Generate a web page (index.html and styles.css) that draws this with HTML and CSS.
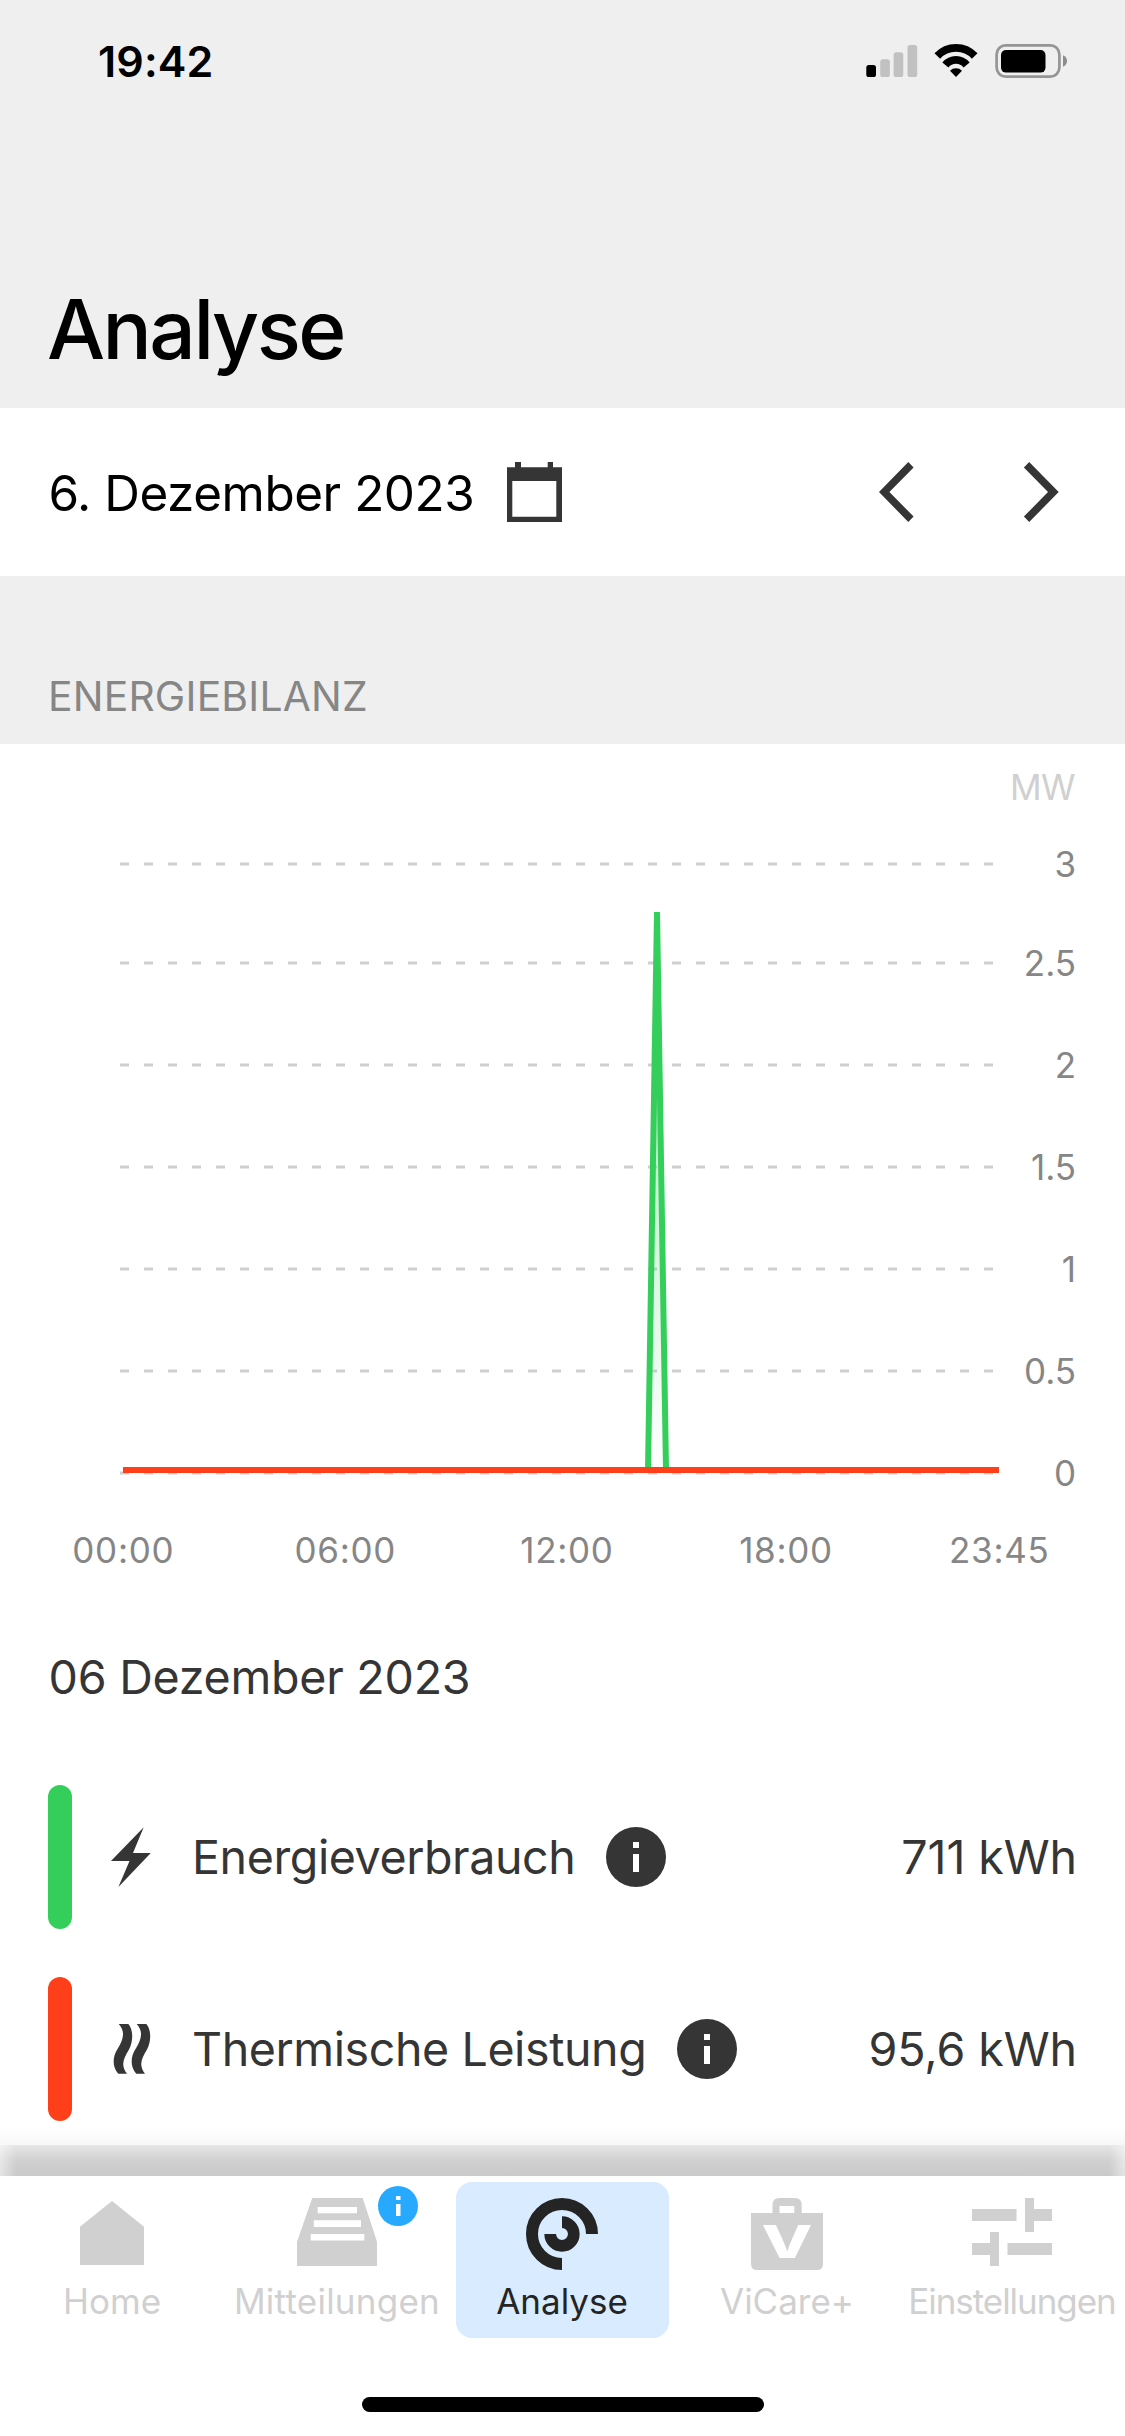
FILE: index.html
```html
<!DOCTYPE html>
<html lang="de">
<head>
<meta charset="utf-8">
<title>Analyse</title>
<link rel="stylesheet" href="styles.css">
</head>
<body>
<div class="screen">
  <header class="header">
    <div class="status-bar">
      <span class="time">19:42</span>
      <svg class="status-icons" viewBox="860 44 208 34" width="208" height="34">
        <rect x="866.3" y="65" width="9.7" height="12" rx="2.6"/>
        <g fill="#c1c1c1">
          <rect x="880.2" y="59.3" width="9.7" height="17.7" rx="2.6"/>
          <rect x="893.6" y="52.3" width="9.7" height="24.7" rx="2.6"/>
          <rect x="907.5" y="45" width="9.7" height="32" rx="2.6"/>
        </g>
        <g fill="none" stroke="#000">
          <path stroke-width="7.7" d="M937.3 56a25.6 25.6 0 0 1 37.4 0"/>
          <path stroke-width="7.8" d="M945.4 65a13.6 13.6 0 0 1 21.2 0"/>
        </g>
        <path d="M950 70.8a8.6 8.6 0 0 1 12 0L956 77Z"/>
        <rect x="996.6" y="45.4" width="62.8" height="31.2" rx="9" fill="none" stroke="#959595" stroke-width="2.7"/>
        <rect x="1001" y="50" width="44.5" height="22.6" rx="5"/>
        <path fill="#8c8c8c" d="M1063 55.3c5.4 2.2 5.4 9.2 0 11.4Z"/>
      </svg>
    </div>
    <h1 class="title">Analyse</h1>
  </header>

  <div class="date-row">
    <span class="date">6. Dezember 2023</span>
    <svg class="calendar" viewBox="0 0 55 60" width="55" height="60">
      <path fill="#353535" fill-rule="evenodd" d="M0 5.3H8V0H14V5.3H40.7V0H46V5.3H55V60H0ZM5.3 19V54.7H49.3V19Z"/>
    </svg>
    <div class="arrows">
      <svg viewBox="0 0 36 60" width="36" height="60"><path fill="#353535" d="M29.3 0L34.6 5.4L10.4 30L34.6 54.6L29.3 60L0 30Z"/></svg>
      <svg viewBox="0 0 36 60" width="36" height="60"><path fill="#353535" d="M6.2 0L.9 5.4L25 30L.9 54.6L6.2 60L35.7 30Z"/></svg>
    </div>
  </div>

  <div class="section-head">ENERGIEBILANZ</div>

  <svg class="chart" viewBox="0 744 1125 903" width="1125" height="903">
    <defs>
      <linearGradient id="fill" x1="0" y1="912" x2="0" y2="1470" gradientUnits="userSpaceOnUse">
        <stop offset="0" stop-color="#34cf5a" stop-opacity=".5"/>
        <stop offset="1" stop-color="#34cf5a" stop-opacity="0"/>
      </linearGradient>
    </defs>
    <text class="unit" x="1075" y="800">MW</text>
    <g class="grid">
      <path d="M120 864H994M120 963H994M120 1065H994M120 1167H994M120 1269H994M120 1371H994M120 1473H994"/>
    </g>
    <g class="y-labels">
      <text x="1076" y="876.5">3</text>
      <text x="1076" y="975.5">2.5</text>
      <text x="1076" y="1077.5">2</text>
      <text x="1076" y="1179.5">1.5</text>
      <text x="1076" y="1281.5">1</text>
      <text x="1076" y="1383.5">0.5</text>
      <text x="1076" y="1485.5">0</text>
    </g>
    <path fill="url(#fill)" d="M648 1470L657 912L666 1470Z"/>
    <path fill="none" stroke="#34cf5a" stroke-width="6" stroke-linejoin="bevel" d="M648 1470L657 912L666 1470"/>
    <path stroke="#ff3f1a" stroke-width="6" d="M123 1470H999"/>
    <g class="x-labels">
      <text x="123.3" y="1563">00:00</text>
      <text x="345.3" y="1563">06:00</text>
      <text x="567" y="1563">12:00</text>
      <text x="786" y="1563">18:00</text>
      <text x="999.3" y="1563">23:45</text>
    </g>
  </svg>

  <div class="legend">
    <div class="legend-date">06 Dezember 2023</div>
    <div class="row">
      <span class="bar green"></span>
      <svg class="row-icon" viewBox="108 1827 48 60" width="48" height="60">
        <path fill="#353535" d="M143.7 1827.3L133 1853H150.8L118.4 1887L129.5 1861H111Z"/>
      </svg>
      <span class="name">Energieverbrauch</span>
      <svg class="info" viewBox="0 0 60 60" width="60" height="60">
        <circle cx="30" cy="30" r="30" fill="#353535"/>
        <path fill="#fff" d="M27 15h6v6h-6zM27 27h6v18h-6z"/>
      </svg>
      <span class="value">711 kWh</span>
    </div>
    <div class="row">
      <span class="bar red"></span>
      <svg class="row-icon" viewBox="108 2019 48 60" width="48" height="60">
        <g fill="#353535">
          <path id="wave" d="M118.7 2024H128.3C133.5 2030 133.3 2041 129 2049.500C124 2058 120 2064.500 127 2073.800H118.300C112 2067 112.500 2056.500 117.500 2049C123 2040 126 2032 118.700 2024Z"/>
          <use href="#wave" x="18"/>
        </g>
      </svg>
      <span class="name">Thermische Leistung</span>
      <svg class="info" viewBox="0 0 60 60" width="60" height="60">
        <circle cx="30" cy="30" r="30" fill="#353535"/>
        <path fill="#fff" d="M27 15h6v6h-6zM27 27h6v18h-6z"/>
      </svg>
      <span class="value">95,6 kWh</span>
    </div>
  </div>

  <div class="shadow-strip"></div>

  <nav class="tabs">
    <div class="tab">
      <svg viewBox="76 2198 72 72" width="72" height="72"><path fill="#d0d0d0" d="M112 2201L144 2226.700V2265H80V2226.700Z"/></svg>
      <span>Home</span>
    </div>
    <div class="tab messages">
      <svg viewBox="297 2198 80 72" width="80" height="72">
        <path fill="#d0d0d0" d="M312.300 2198H362.700L377 2241.700V2266H297V2241.700Z"/>
        <path fill="#fff" d="M317.700 2207H357V2213.300H317.700ZM313.800 2220.300H361V2227H313.800ZM310.700 2234H364.300V2240.500H310.700Z"/>
      </svg>
      <span>Mitteilungen</span>
      <svg class="badge" viewBox="0 0 40 40" width="40" height="40">
        <circle cx="20" cy="20" r="20" fill="#26a9ff"/>
        <path fill="#fff" d="M18 10h4.500v4h-4.500zM18 18h4.500v12h-4.500z"/>
      </svg>
    </div>
    <div class="tab active">
      <svg viewBox="526 2198 72 72" width="72" height="72">
        <g fill="none" stroke="#242424">
          <path stroke-width="12" d="M592 2234A30 30 0 1 0 562 2264"/>
          <path stroke-width="11.700" d="M562 2222.200A11.800 11.800 0 1 1 550.200 2234"/>
        </g>
      </svg>
      <span>Analyse</span>
    </div>
    <div class="tab vicare">
      <svg viewBox="751 2198 72 72" width="72" height="72">
        <path fill="#d0d0d0" fill-rule="evenodd" d="M751 2213H772.500V2205Q772.500 2198 779.500 2198H794.700Q801.700 2198 801.700 2205V2213H823V2264Q823 2270 817 2270H757Q751 2270 751 2264ZM779.500 2206V2213H794.300V2206Z"/>
        <text class="logo-v" x="761.500" y="2258" textLength="51" lengthAdjust="spacingAndGlyphs">V</text>
      </svg>
      <span>ViCare+</span>
    </div>
    <div class="tab settings">
      <svg viewBox="972 2198 80 72" width="80" height="72">
        <path fill="#d0d0d0" d="M972 2209H1016.500V2221H972ZM1025 2198H1034V2209H1052V2221H1034V2232H1025ZM972 2243H990V2232H999V2266H990V2255H972ZM1007.500 2243H1052V2255H1007.500Z"/>
      </svg>
      <span>Einstellungen</span>
    </div>
  </nav>
  <div class="home-indicator"></div>
</div>
</body>
</html>
```
FILE: styles.css
```css
* { box-sizing: border-box; }

body {
  margin: 0;
  background: #fff;
  color: #353535;
  font-family: Inter, "Liberation Sans", sans-serif;
}

svg { display: block; flex: none; }

.screen {
  width: 1125px;
  height: 2436px;
  overflow: hidden;
  background: #fff;
}

/* Header */
.header {
  height: 408px;
  background: #efefef;
  color: #000;
}
.status-bar {
  height: 122px;
  padding: 0 57px 0 98px;
  display: flex;
  align-items: center;
  justify-content: space-between;
}
.time {
  font-size: 43px;
  font-weight: 600;
  letter-spacing: .1px;
}
.title {
  margin: 158px 0 0 47px;
  font-size: 82px;
  font-weight: 500;
  line-height: 100px;
  letter-spacing: -2.55px;
}

/* Date picker */
.date-row {
  height: 168px;
  padding: 0 66px 0 48.5px;
  display: flex;
  align-items: center;
}
.date {
  padding-top: 1px;
  font-size: 49.4px;
  letter-spacing: -.44px;
  color: #000;
}
.calendar { margin-left: 32.5px; }
.arrows {
  margin-left: auto;
  display: flex;
  gap: 108px;
}

.section-head {
  height: 168px;
  padding: 96px 0 24px 48px;
  background: #efefef;
  color: #868686;
  font-size: 40.8px;
  line-height: 48px;
  letter-spacing: .2px;
}

/* Chart */
.chart text { font-size: 35px; fill: #868686; }
.chart .unit { fill: #d0d0d0; text-anchor: end; letter-spacing: -.5px; }
.y-labels { text-anchor: end; }
.x-labels { text-anchor: middle; letter-spacing: .7px; }
.grid path {
  stroke: #cfcfcf;
  stroke-width: 3;
  stroke-dasharray: 9 15;
  fill: none;
}

/* Legend */
.legend {
  height: 498px;
  padding: 0 48px;
  font-size: 46.6px;
  background: linear-gradient(#fff, #f8f8f8) bottom / 100% 18px no-repeat;
}
.legend-date {
  margin: 0 0 78px .5px;
  line-height: 60px;
  letter-spacing: -.25px;
}
.row {
  height: 144px;
  margin-bottom: 48px;
  display: flex;
  align-items: center;
}
.row:last-child { margin-bottom: 0; }
.bar {
  width: 24px;
  height: 144px;
  border-radius: 12px;
}
.green { background: #34cf5a; }
.red { background: #ff3f1a; }
.row-icon { margin: 0 36px; }
.name { letter-spacing: -.43px; }
.info { margin-left: 30.5px; }
.value { margin-left: auto; letter-spacing: -.1px; }

.shadow-strip {
  height: 31px;
  background:
    linear-gradient(90deg, rgba(255,255,255,.5), rgba(255,255,255,0) 16px, rgba(255,255,255,0) 1109px, rgba(255,255,255,.5)),
    linear-gradient(#e7e7e7, #d0d0d0 50%, #cacaca);
}

/* Tab bar */
.tabs {
  margin-left: -.5px;
  padding-top: 6px;
  display: grid;
  grid-template-columns: repeat(5, 225px);
  justify-items: center;
}
.tab {
  position: relative;
  width: 213px;
  height: 156px;
  padding-top: 16px;
  display: flex;
  flex-direction: column;
  align-items: center;
  gap: 9px;
  border-radius: 16px;
  color: #d0d0d0;
  font-size: 35px;
  line-height: 44px;
  white-space: nowrap;
}
.tab.active { background: #d9ebff; color: #242424; }
.messages { letter-spacing: .25px; }
.settings { letter-spacing: -1.05px; }
.badge {
  position: absolute;
  left: 147px;
  top: 4px;
}
.logo-v {
  fill: #fff;
  font-size: 45px;
  font-weight: 800;
}

.home-indicator {
  width: 402px;
  height: 15px;
  margin: 59px auto 0;
  border-radius: 7.5px;
  background: #000;
}
```
